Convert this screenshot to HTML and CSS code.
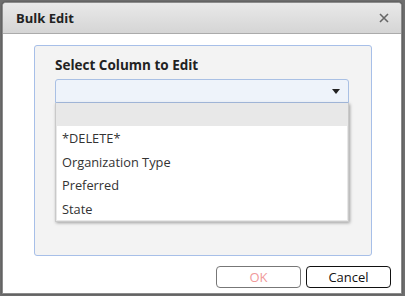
FILE: index.html
```html
<!DOCTYPE html>
<html>
<head>
<meta charset="utf-8">
<link rel="stylesheet" href="styles.css">
</head>
<body>
<div class="dialog">
  <div class="header">
    <span class="title">Bulk Edit</span>
    <span class="close" aria-label="Close">
      <svg width="10" height="10" viewBox="0 0 10 10"><path d="M1 1L9 9M9 1L1 9" stroke="#666" stroke-width="1.6" fill="none"/></svg>
    </span>
  </div>
  <div class="content">
    <div class="panel">
      <div class="label">Select Column to Edit</div>
      <div class="combo">
        <div class="select">
          <svg class="arrow" width="8" height="5" viewBox="0 0 8 5"><path d="M0 0H8L4 5Z" fill="#222"/></svg>
        </div>
        <div class="dropdown">
          <div class="dropdown-head"></div>
          <ul class="list">
            <li>*DELETE*</li>
            <li>Organization Type</li>
            <li>Preferred</li>
            <li>State</li>
          </ul>
        </div>
      </div>
    </div>
    <div class="buttons">
      <button class="btn btn-disabled">OK</button>
      <button class="btn">Cancel</button>
    </div>
  </div>
</div>
</body>
</html>
```
FILE: styles.css
```css
html, body {
  margin: 0;
  padding: 0;
}
body {
  background: #6f6f6f;
  width: 405px;
  height: 296px;
  overflow: hidden;
  font-family: "Open Sans", "Noto Sans", sans-serif;
  color: #333;
}
.dialog {
  margin: 2px 0 0 2px;
  width: 398px;
  height: 290px;
  border: 1px solid #8c8c8c;
  border-radius: 4px 4px 0 0;
  background: #fff;
  display: flex;
  flex-direction: column;
  box-shadow: 0 0 2px rgba(0,0,0,0.4);
}
.header {
  height: 30px;
  flex: none;
  background: linear-gradient(#e9e9e9, #d5d5d5);
  border-bottom: 1px solid #ababab;
  border-radius: 3px 3px 0 0;
  display: flex;
  align-items: center;
  justify-content: space-between;
  padding: 0 12px 0 13px;
}
.title {
  font-weight: bold;
  font-size: 13px;
  color: #222;
}
.close {
  display: flex;
  width: 10px;
  height: 10px;
}
.content {
  flex: 1;
  display: flex;
  flex-direction: column;
  padding: 11px 10px 0 31px;
}
.panel {
  box-sizing: border-box;
  width: 338px;
  height: 211px;
  border: 1px solid #a7bfe8;
  border-radius: 3px;
  background: #f3f3f3;
  padding: 10px 0 0 20px;
}
.label {
  font-weight: bold;
  font-size: 13.5px;
  color: #222;
  height: 23px;
  line-height: 18px;
}
.combo {
  position: relative;
  width: 294px;
}
.select {
  height: 22px;
  border: 1px solid #a9c0e4;
  border-radius: 3px 3px 0 0;
  background: #eef3fa;
  display: flex;
  align-items: center;
  justify-content: flex-end;
  padding-right: 8px;
}
.arrow {
  display: block;
}
.dropdown {
  position: absolute;
  left: 0;
  top: 24px;
  width: 290px;
  background: #e8e8e8;
  border: 1px solid #c9c9c9;
  border-top: none;
  padding: 0 1px 1px 1px;
  box-shadow: 1px 1px 3px rgba(0,0,0,0.35);
}
.dropdown-head {
  height: 23px;
}
.list {
  list-style: none;
  margin: 0;
  padding: 0;
  background: #fff;
}
.list li {
  height: 23.5px;
  line-height: 24px;
  font-size: 12.8px;
  padding-left: 5px;
  color: #333;
}
.buttons {
  display: flex;
  justify-content: flex-end;
  gap: 5px;
  margin-top: 10px;
}
.btn {
  width: 85px;
  height: 22px;
  border: 1px solid #111;
  border-radius: 4px;
  background: #fff;
  font-family: "Open Sans", "Noto Sans", sans-serif;
  font-size: 13px;
  color: #111;
  padding: 0;
}
.btn-disabled {
  border-color: #777;
  color: #f09a9a;
}
```
